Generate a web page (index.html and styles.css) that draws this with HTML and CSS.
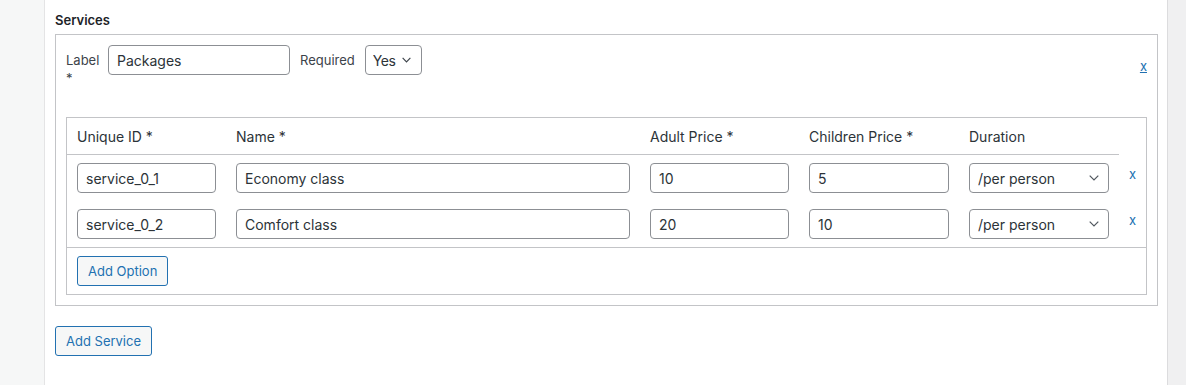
FILE: index.html
```html
<!DOCTYPE html>
<html lang="en">
<head>
    <meta charset="UTF-8">
    <title>Services</title>

    <link rel="stylesheet" href="styles.css">
</head>

<body>
    <div class="page">
        <div class="side-strip"></div>

        <div class="panel">
            <h2 class="section-title">Services</h2>

            <div class="service-box">
                <div class="service-head">
                    <label class="field-label label-name">Label *</label>
                    <input type="text" class="text-input label-input" value="Packages">
                    <span class="field-label">Required</span>
                    <div class="select-wrap required-select">
                        <select class="select-input">
                            <option>Yes</option>
                            <option>No</option>
                        </select>
                        <svg class="chevron" width="10" height="6" viewBox="0 0 10 6"><polyline points="0.7,0.7 5,5 9.3,0.7" /></svg>
                    </div>
                    <a href="#" class="remove-service">x</a>
                </div>

                <table class="options">
                    <colgroup>
                        <col class="col-id">
                        <col>
                        <col class="col-price">
                        <col class="col-price-wide">
                        <col class="col-price-wide">
                        <col class="col-remove">
                    </colgroup>
                    <thead>
                        <tr>
                            <th>Unique ID *</th>
                            <th>Name *</th>
                            <th>Adult Price *</th>
                            <th>Children Price *</th>
                            <th>Duration</th>
                            <td class="no-head"></td>
                        </tr>
                    </thead>
                    <tbody>
                        <tr>
                            <td><input type="text" class="text-input" value="service_0_1"></td>
                            <td><input type="text" class="text-input" value="Economy class"></td>
                            <td><input type="text" class="text-input" value="10"></td>
                            <td><input type="text" class="text-input" value="5"></td>
                            <td>
                                <div class="select-wrap">
                                    <select class="select-input"><option>/per person</option></select>
                                    <svg class="chevron" width="10" height="6" viewBox="0 0 10 6"><polyline points="0.7,0.7 5,5 9.3,0.7" /></svg>
                                </div>
                            </td>
                            <td><a href="#" class="remove-option">x</a></td>
                        </tr>
                        <tr class="last-row">
                            <td><input type="text" class="text-input" value="service_0_2"></td>
                            <td><input type="text" class="text-input" value="Comfort class"></td>
                            <td><input type="text" class="text-input" value="20"></td>
                            <td><input type="text" class="text-input" value="10"></td>
                            <td>
                                <div class="select-wrap">
                                    <select class="select-input"><option>/per person</option></select>
                                    <svg class="chevron" width="10" height="6" viewBox="0 0 10 6"><polyline points="0.7,0.7 5,5 9.3,0.7" /></svg>
                                </div>
                            </td>
                            <td><a href="#" class="remove-option">x</a></td>
                        </tr>
                    </tbody>
                    <tfoot>
                        <tr>
                            <td colspan="6"><button type="button" class="button">Add Option</button></td>
                        </tr>
                    </tfoot>
                </table>
            </div>

            <button type="button" class="button add-service">Add Service</button>
        </div>

        <div class="right-strip"></div>
    </div>
</body>
</html>
```

FILE: styles.css
```css
html, body {
    margin: 0;
    padding: 0;
}

body {
    font: normal 14px/18px Inter, "Liberation Sans", sans-serif;
    color: #2c3338;
    background: #fff;
}

.page {
    display: flex;
    min-height: 100vh;
}

.side-strip {
    width: 44px;
    background: #f6f7f7;
    border-right: 1px solid #e4e4e5;
}

.right-strip {
    width: 18px;
    background: #f0f0f1;
    border-left: 1px solid #dcdcde;
}

.panel {
    flex: 1;
    padding: 11px 9px 0 10px;
    background: #fff;
}

.section-title {
    margin: 0 0 5px;
    font-size: 13px;
    line-height: 18px;
    font-weight: 600;
    color: #1d2327;
}

.service-box {
    border: 1px solid #c3c4c7;
    padding: 10px;
}

.service-head {
    display: flex;
    align-items: flex-start;
}

.field-label {
    padding-top: 6px;
    margin-right: 10px;
    font-size: 13px;
    color: #3c434a;
}

.label-name {
    width: 32px;
}

.text-input,
.select-input {
    box-sizing: border-box;
    height: 30px;
    margin: 0;
    padding: 0 8px;
    border: 1px solid #8c8f94;
    border-radius: 4px;
    background: #fff;
    color: #2c3338;
    font: normal 14px Inter, "Liberation Sans", sans-serif;
    width: 100%;
}

.label-input {
    width: 182px;
    margin-right: 10px;
}

.select-wrap {
    position: relative;
}

.select-input {
    -webkit-appearance: none;
    appearance: none;
    padding-right: 24px;
}

.required-select {
    width: 57px;
}

.required-select .select-input {
    padding-left: 7px;
    letter-spacing: -0.4px;
}

.chevron {
    position: absolute;
    right: 10px;
    top: 12px;
    fill: none;
    stroke: #50575e;
    stroke-width: 1.2;
    pointer-events: none;
}

.required-select .chevron {
    right: 11px;
    width: 9px;
    stroke: #3c434a;
    stroke-width: 1.3;
}

.remove-service {
    margin-left: auto;
    align-self: center;
    color: #2271b1;
    font-size: 13px;
    text-decoration: underline;
}

.options {
    width: 100%;
    margin-top: 30px;
    table-layout: fixed;
    border-collapse: separate;
    border-spacing: 0;
    border: 1px solid #c3c4c7;
}

.col-id, .col-price { width: 159px; }
.col-price-wide { width: 160px; }
.col-remove { width: 27px; }

.options th {
    padding: 10px 10px 8px;
    text-align: left;
    font-weight: normal;
    color: #2c3338;
    border-bottom: 1px solid #c3c4c7;
}

.options td {
    padding: 8px 10px;
    vertical-align: top;
}

.options .no-head {
    padding: 0;
}

.last-row td {
    border-bottom: 1px solid #c3c4c7;
}

.remove-option {
    display: block;
    margin-top: 2px;
    color: #2271b1;
    font-size: 13px;
    text-decoration: none;
}

.button {
    box-sizing: border-box;
    height: 30px;
    padding: 0 10px;
    border: 1px solid #2271b1;
    border-radius: 3px;
    background: #f6f7f7;
    color: #2271b1;
    font: normal 13px Inter, "Liberation Sans", sans-serif;
    cursor: pointer;
}

.add-service {
    margin-top: 20px;
}
```
